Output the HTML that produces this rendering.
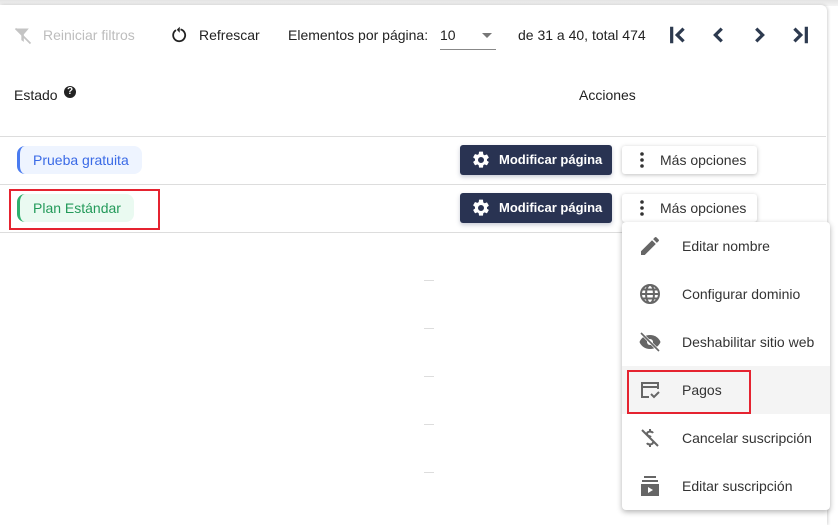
<!DOCTYPE html>
<html><head><meta charset="utf-8"><style>
*{box-sizing:border-box;margin:0;padding:0}
body{width:838px;height:512px;overflow:hidden;background:#fff;font-family:"Liberation Sans",sans-serif;font-size:14px;color:#333;position:relative}
.top{position:absolute;left:0;top:0;width:838px;height:6px;background:linear-gradient(#e4e4e4,#f4f4f4)}
.card{position:absolute;left:0;top:5px;width:827px;height:520px;background:#fff;border-radius:0 6px 0 0;box-shadow:1px 0 3px rgba(0,0,0,.18)}
.a{position:absolute;white-space:nowrap}
.line{position:absolute;left:0;width:826px;height:1px;background:#ddd}
.chip{position:absolute;height:28px;border-radius:8px;padding-left:13px;line-height:28px;font-size:14px}
.btn{position:absolute;left:460px;width:152px;height:30px;background:#293352;color:#fff;border-radius:3px;font-weight:bold;font-size:13px;line-height:30px;padding-left:39px;box-shadow:0 2px 4px rgba(40,50,90,.25)}
.btn svg{position:absolute;left:11px;top:5px}
.mo{position:absolute;left:622px;width:135px;height:28px;background:#fff;border-radius:3px;box-shadow:0 1px 4px rgba(0,0,0,.25);line-height:28px;padding-left:38px;font-size:14px;color:#333}
.mo svg{position:absolute;left:12px;top:5px}
.menu{position:absolute;left:622px;top:222px;width:208px;height:288px;background:#fff;border-radius:4px;box-shadow:0 2px 6px rgba(0,0,0,.3)}
.it{position:absolute;left:0;width:208px;height:48px;line-height:48px;padding-left:60px;font-size:14px;color:#333}
.it svg{position:absolute;left:16px;top:12px}
.dash{position:absolute;left:424px;width:10px;height:1px;background:#ddd}
</style></head><body>
<div class="top"></div>
<div class="card"></div>
<svg class="a" style="left:13px;top:26px" width="20" height="20" viewBox="0 0 24 24"><path fill="#c4c4c4" d="M3 3h16l-6 7v9l-3-2v-7z"/><path stroke="#c4c4c4" stroke-width="2" d="M3 3l18 18"/></svg>
<div class="a" style="left:43px;top:27px;color:#bdbdbd">Reiniciar filtros</div>
<svg class="a" style="left:170px;top:26px" width="18" height="18" viewBox="0 0 24 24"><path fill="none" stroke="#222" stroke-width="2.4" d="M8 5.5A8 8 0 1 0 14 4.5"/><path fill="#222" d="M10 1v8l-4-4z" transform="translate(3 0)"/></svg>
<div class="a" style="left:199px;top:27px;color:#222">Refrescar</div>
<div class="a" style="left:288px;top:27px;color:#222">Elementos por página:</div>
<div class="a" style="left:440px;top:27px;color:#222">10</div>
<div class="a" style="left:440px;top:49px;width:56px;height:1px;background:#888"></div>
<div class="a" style="left:482px;top:33px;width:0;height:0;border-left:5px solid transparent;border-right:5px solid transparent;border-top:5px solid #777"></div>
<div class="a" style="left:518px;top:27px;color:#222">de 31 a 40, total 474</div>
<svg class="a" style="left:668px;top:24px" width="22" height="22" viewBox="0 0 24 24"><path fill="none" stroke="#2d3a4f" stroke-width="3.5" d="M4 3v18M17 5l-7 7 7 7"/></svg>
<svg class="a" style="left:708px;top:24px" width="22" height="22" viewBox="0 0 24 24"><path fill="none" stroke="#2d3a4f" stroke-width="3.5" d="M15 5l-7 7 7 7"/></svg>
<svg class="a" style="left:748px;top:24px" width="22" height="22" viewBox="0 0 24 24"><path fill="none" stroke="#2d3a4f" stroke-width="3.5" d="M9 5l7 7-7 7"/></svg>
<svg class="a" style="left:788px;top:24px" width="22" height="22" viewBox="0 0 24 24"><path fill="none" stroke="#2d3a4f" stroke-width="3.5" d="M20 3v18M7 5l7 7-7 7"/></svg>
<div class="a" style="left:14px;top:87px;color:#222">Estado</div>
<div class="a" style="left:64px;top:86px;width:12px;height:12px;border-radius:50%;background:#222;color:#fff;font-size:10px;font-weight:bold;text-align:center;line-height:12px">?</div>
<div class="a" style="left:579px;top:87px;color:#222">Acciones</div>
<div class="line" style="top:136px"></div>
<div class="line" style="top:184px"></div>
<div class="line" style="top:232px"></div>
<div class="chip" style="left:17px;top:146px;width:125px;background:#eef4ff;color:#3a6ae6;border-left:3px solid #4a7bf0">Prueba gratuita</div>
<div class="chip" style="left:17px;top:194px;width:117px;background:#eafaf1;color:#239a5a;border-left:3px solid #2fb06d">Plan Estándar</div>
<div class="a" style="left:9px;top:189px;width:151px;height:41px;border:2px solid #e52330"></div>
<div class="btn" style="top:145px"><svg width="20" height="20" viewBox="0 0 24 24"><path fill="#fff" d="M19.14 12.94c.04-.3.06-.61.06-.94s-.02-.64-.07-.94l2.03-1.58a.49.49 0 0 0 .12-.61l-1.920-3.32a.49.49 0 0 0-.59-.22l-2.39.96a7 7 0 0 0-1.62-.94l-.36-2.54A.48.48 0 0 0 13.92 2h-3.84a.48.48 0 0 0-.48.41l-.36 2.54c-.59.24-1.130.57-1.62.94l-2.39-.96a.48.48 0 0 0-.59.22L2.72 8.47a.47.47 0 0 0 .12.61l2.03 1.58c-.05.3-.07.62-.07.94s.02.64.07.94l-2.030 1.58a.49.49 0 0 0-.12.61l1.92 3.32c.12.22.37.29.59.22l2.39-.96c.5.38 1.03.7 1.62.94l.36 2.54c.05.24.24.41.48.41h3.84c.24 0 .44-.17.47-.41l.36-2.54c.59-.24 1.13-.56 1.62-.94l2.39.96c.22.08.47 0 .59-.22l1.92-3.32a.46.46 0 0 0-.12-.61zM12 15.6A3.6 3.6 0 1 1 12 8.4a3.6 3.6 0 0 1 0 7.2z"/></svg>Modificar página</div>
<div class="btn" style="top:193px"><svg width="20" height="20" viewBox="0 0 24 24"><path fill="#fff" d="M19.14 12.94c.04-.3.06-.61.06-.94s-.02-.64-.07-.94l2.03-1.58a.49.49 0 0 0 .12-.61l-1.92-3.32a.49.49 0 0 0-.59-.22l-2.39.96a7 7 0 0 0-1.62-.94l-.36-2.54A.48.48 0 0 0 13.92 2h-3.84a.48.48 0 0 0-.48.41l-.36 2.54c-.59.24-1.13.57-1.62.94l-2.39-.96a.48.48 0 0 0-.59.22L2.72 8.47a.47.47 0 0 0 .12.61l2.03 1.58c-.05.3-.07.62-.07.94s.02.64.07.94l-2.03 1.58a.49.49 0 0 0-.12.61l1.92 3.32c.12.22.37.29.59.22l2.39-.96c.5.38 1.03.7 1.62.94l.36 2.54c.05.24.24.41.48.41h3.84c.24 0 .44-.17.47-.41l.36-2.54c.59-.24 1.13-.56 1.62-.94l2.39.96c.22.08.47 0 .59-.22l1.92-3.32a.46.46 0 0 0-.12-.61zM12 15.6A3.6 3.6 0 1 1 12 8.4a3.6 3.6 0 0 1 0 7.2z"/></svg>Modificar página</div>
<div class="mo" style="top:146px"><svg width="16" height="18" viewBox="0 0 16 18"><circle cx="8" cy="3" r="1.8" fill="#333"/><circle cx="8" cy="9" r="1.8" fill="#333"/><circle cx="8" cy="15" r="1.8" fill="#333"/></svg>Más opciones</div>
<div class="mo" style="top:194px"><svg width="16" height="18" viewBox="0 0 16 18"><circle cx="8" cy="3" r="1.8" fill="#333"/><circle cx="8" cy="9" r="1.8" fill="#333"/><circle cx="8" cy="15" r="1.8" fill="#333"/></svg>Más opciones</div>
<div class="dash" style="top:280px"></div><div class="dash" style="top:328px"></div><div class="dash" style="top:376px"></div><div class="dash" style="top:424px"></div><div class="dash" style="top:472px"></div>
<div class="menu">
<div class="it" style="top:0"><svg width="24" height="24" viewBox="0 0 24 24"><path fill="#666" d="M3 17.25V21h3.75L17.81 9.94l-3.75-3.75zM20.71 7.04a1 1 0 0 0 0-1.41l-2.34-2.34a1 1 0 0 0-1.41 0l-1.83 1.83 3.75 3.75z"/></svg>Editar nombre</div>
<div class="it" style="top:48px"><svg width="24" height="24" viewBox="0 0 24 24"><g fill="none" stroke="#666" stroke-width="2"><circle cx="12" cy="12" r="9"/><ellipse cx="12" cy="12" rx="4" ry="9"/><path d="M3 12h18M4.5 7.5h15M4.5 16.5h15"/></g></svg>Configurar dominio</div>
<div class="it" style="top:96px"><svg width="24" height="24" viewBox="0 0 24 24"><path fill="#666" d="M12 5C7 5 3 8 1.5 12 3 16 7 19 12 19s9-3 10.5-7C21 8 17 5 12 5z"/><circle cx="12" cy="12" r="3" fill="#fff"/><path stroke="#fff" stroke-width="3" d="M3 3l18 18"/><path stroke="#666" stroke-width="1.6" d="M3 3l18 18"/></svg>Deshabilitar sitio web</div>
<div class="it" style="top:144px;background:#f4f4f4"><svg width="24" height="24" viewBox="0 0 24 24"><path fill="none" stroke="#666" stroke-width="2" d="M11 19H4V5h16v6M4 9h16M13 16l3 3 5-5"/></svg>Pagos</div>
<div class="it" style="top:192px"><svg width="24" height="24" viewBox="0 0 24 24"><path fill="none" stroke="#666" stroke-width="2" d="M15 7c-1-2-6-2-6 1 0 2 3 2 4 3M12 3v3M12 18v3M9 17c1 2 6 2 6-1M4 4l16 16"/></svg>Cancelar suscripción</div>
<div class="it" style="top:240px"><svg width="24" height="24" viewBox="0 0 24 24"><path fill="#666" d="M6 2h12v2H6zM4 6h16v2H4zM3 10h18v12H3z"/><path fill="#fff" d="M10 13v6l5-3z"/></svg>Editar suscripción</div>
</div>
<div class="a" style="left:627px;top:370px;width:124px;height:44px;border:2px solid #e52330"></div>
</body></html>
